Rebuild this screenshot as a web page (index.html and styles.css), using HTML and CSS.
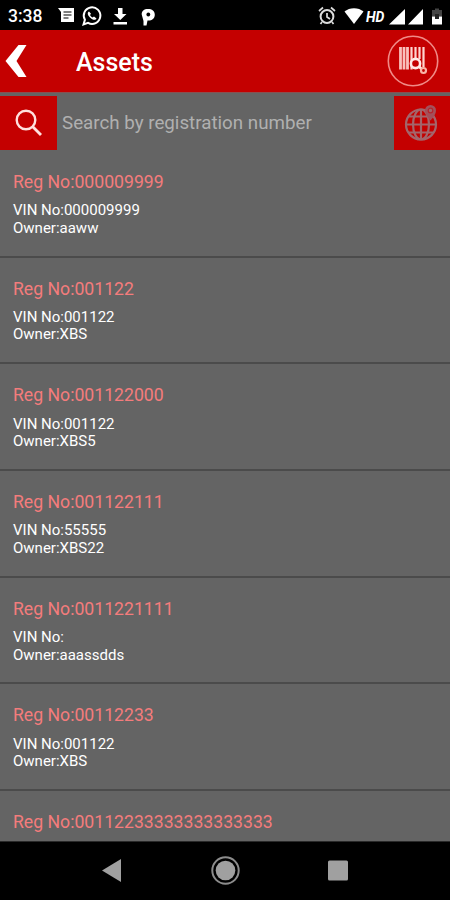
FILE: index.html
```html
<!DOCTYPE html>
<html lang="en">
<head>
    <meta charset="UTF-8">
    <meta name="viewport" content="width=device-width, initial-scale=1.0">
    <title>Assets</title>
    <link rel="stylesheet" href="styles.css">
</head>
<body>
    <div class="screen">
        <!-- Status bar -->
        <div class="status-bar">
            <span class="clock">3:38</span>
            <svg class="status-left" width="100" height="24" viewBox="0 0 100 24">
                <path d="M0 4h16v14H3V8z" fill="#fff"/>
                <path d="M5.500 8h8M5.500 11h8M5.500 14h5" stroke="#000" stroke-width="1.200"/>
                <path d="M25.500 20.500l1.400-4.700a8.300 8.300 0 1 1 3.200 3.100z" fill="none" stroke="#fff" stroke-width="2"/>
                <path d="M31 7.500c-2 1-1.500 3.500 1 6s5.500 3.300 6.500 1l-2.500-2-1.500 1c-1-.5-2-1.500-2.500-2.500l1-1.300z" fill="#fff"/>
                <path d="M60 4h4.500v6h4l-6.200 6-6.300-6h4zM55.500 18h13.500v2.500H55.500z" fill="#fff"/>
                <path d="M85.500 21.500V17l-1.800-6.500C83.500 7 86 5 90 5c4 0 6.800 2 6.800 5.700 0 3.800-2.800 5.800-6.300 5.800h-1l-1 5z" fill="#fff"/>
                <circle cx="90.300" cy="10.500" r="1.900" fill="#000"/>
            </svg>
            <svg class="status-right" width="126" height="24" viewBox="0 0 126 24">
                <circle cx="9" cy="12.500" r="6.400" fill="none" stroke="#ddd" stroke-width="2"/>
                <path d="M1 7l4-3.500M17 7l-4-3.500M9 9v4l3 2M4 18l-1.500 2M14 18l1.500 2" fill="none" stroke="#ddd" stroke-width="1.700"/>
                <path d="M26.500 7.500c5-4.500 14-4.500 19 0L36 20z" fill="#fff"/>
                <text class="hd" x="48" y="17.500">HD</text>
                <path d="M71 20.500L87 5v15.500zM90 20.500L105 5v15.500z" fill="#fff"/>
                <path d="M114 6h3V4.500h4V6h3v6.500h-10z" fill="#444"/>
                <path d="M114 12.500h10v8h-10z" fill="#fff"/>
                <path d="M117 10h4v5h-4z" fill="#222"/>
            </svg>
        </div>

        <!-- Title bar -->
        <header class="title-bar">
            <svg class="back-icon" width="22" height="34" viewBox="0 0 22 34">
                <path d="M13.500 1H21.500L11.500 17 21.500 33h-8L.500 17z" fill="#fff"/>
            </svg>
            <h1>Assets</h1>
            <svg class="scan-icon" width="52" height="52" viewBox="0 0 52 52">
                <circle cx="26" cy="26" r="24.700" fill="none" stroke="#f08a86" stroke-width="1.600"/>
                <path d="M13.500 12v22.500M17 12v22.500M20.500 12v22.500" stroke="#f9c0bb" stroke-width="2.800"/>
                <path d="M24.500 12v22.500M28.500 12v12M32.500 12v12M36.500 12v20" stroke="#ffd5d0" stroke-width="2.200"/>
                <circle cx="28.500" cy="28.500" r="4.600" fill="#c40000" stroke="#ffe9e6" stroke-width="2.600"/>
                <path d="M32 31.500l2.500 2.500" stroke="#ffe9e6" stroke-width="2.600"/>
                <circle cx="36.500" cy="35.500" r="2.500" fill="none" stroke="#f9b5a8" stroke-width="2.200"/>
            </svg>
        </header>

        <!-- Search -->
        <div class="search-bar">
            <button class="search-button" aria-label="Search">
                <svg width="28" height="28" viewBox="0 0 28 28">
                    <circle cx="11" cy="11" r="9.300" fill="none" stroke="#ffe0dd" stroke-width="2.400"/>
                    <path d="M17.500 17.500L26 26" stroke="#ffe0dd" stroke-width="2.900"/>
                </svg>
            </button>
            <span class="search-input">Search by registration number</span>
            <button class="globe-button" aria-label="Search online">
                <svg width="36" height="38" viewBox="0 0 36 38">
                    <g fill="none" stroke="#a3656b" stroke-width="2.200">
                        <circle cx="17" cy="20.500" r="15"/>
                        <ellipse cx="17" cy="20.500" rx="8" ry="15"/>
                        <path d="M17 5.500v30M2 20.500h30M4 12.500h26M4 28.500h26"/>
                    </g>
                    <path d="M26.500 16.500c-3-3.500-5.500-6.500-5.500-10a5.500 5.500 0 0 1 11 0C32 10 29.500 13 26.500 16.500z" fill="#a3505a"/>
                    <circle cx="26.500" cy="6.500" r="2.300" fill="#a3656b" stroke="#b5242b" stroke-width="1.200"/>
                </svg>
            </button>
        </div>

        <!-- Asset list -->
        <ul class="asset-list">
            <li class="asset">
                <h2>Reg No:000009999</h2>
                <p>VIN No:000009999</p>
                <p>Owner:aaww</p>
            </li>
            <li class="asset">
                <h2>Reg No:001122</h2>
                <p>VIN No:001122</p>
                <p>Owner:XBS</p>
            </li>
            <li class="asset">
                <h2>Reg No:001122000</h2>
                <p>VIN No:001122</p>
                <p>Owner:XBS5</p>
            </li>
            <li class="asset">
                <h2>Reg No:001122111</h2>
                <p>VIN No:55555</p>
                <p>Owner:XBS22</p>
            </li>
            <li class="asset">
                <h2>Reg No:0011221111</h2>
                <p>VIN No:</p>
                <p>Owner:aaassdds</p>
            </li>
            <li class="asset">
                <h2>Reg No:00112233</h2>
                <p>VIN No:001122</p>
                <p>Owner:XBS</p>
            </li>
            <li class="asset">
                <h2>Reg No:00112233333333333333</h2>
            </li>
        </ul>

        <!-- Navigation bar -->
        <nav class="nav-bar">
            <svg width="450" height="58" viewBox="0 0 450 58">
                <path d="M102 28.500l19-11.500v23z" fill="#a0a0a0"/>
                <circle cx="225.500" cy="28.500" r="13.200" fill="none" stroke="#8c8c8c" stroke-width="2"/>
                <circle cx="225.500" cy="28.500" r="9.800" fill="#a0a0a0"/>
                <rect x="328" y="18.500" width="20" height="20" rx="1.500" fill="#a0a0a0"/>
            </svg>
        </nav>
    </div>
</body>
</html>
```

FILE: styles.css
```css
:root {
    --red: #c40000;
    --grey: #646464;
    --line: #4b4b4b;
    --pink: #f47c7c;
}

* {
    margin: 0;
    padding: 0;
    box-sizing: border-box;
}

body {
    font-family: Roboto, "Liberation Sans", sans-serif;
    background: #000;
    color: #fff;
}

svg {
    display: block;
    flex-shrink: 0;
}

.screen {
    display: flex;
    flex-direction: column;
    width: 450px;
    height: 900px;
    background: var(--grey);
    overflow: hidden;
}

/* Status bar */
.status-bar {
    display: flex;
    align-items: center;
    height: 30px;
    padding: 2px 6px 0 8px;
    background: #000;
    flex-shrink: 0;
}

.clock {
    width: 50px;
    font-size: 17.500px;
    font-weight: 500;
}

.status-right {
    margin-left: auto;
}

.hd {
    font-size: 14px;
    font-weight: 700;
    font-style: italic;
    fill: #fff;
}

/* Title bar */
.title-bar {
    display: flex;
    align-items: center;
    height: 62px;
    padding: 0 11px 0 5px;
    background: var(--red);
    flex-shrink: 0;
}

.title-bar h1 {
    margin-left: 49px;
    padding-top: 3px;
    font-size: 25px;
    font-weight: 500;
}

.scan-icon {
    margin-left: auto;
}

/* Search */
.search-bar {
    display: flex;
    align-items: center;
    height: 58px;
    padding-top: 3px;
    border-top: 1px solid #8a5050;
    flex-shrink: 0;
}

.search-bar button {
    display: flex;
    align-items: center;
    justify-content: center;
    height: 54px;
    width: 57px;
    border: none;
    background: var(--red);
}

.search-bar .globe-button {
    width: 56px;
}

.search-input {
    flex: 1;
    padding-left: 5px;
    font-size: 18.750px;
    color: #b0b0b0;
}

/* Asset list */
.asset-list {
    flex: 1;
    min-height: 0;
    padding-top: 1px;
    list-style: none;
    overflow: hidden;
}

.asset {
    height: 106.700px;
    padding: 21px 13px 0;
    border-bottom: 2px solid var(--line);
}

.asset h2 {
    margin-bottom: 10.300px;
    font-size: 17.650px;
    line-height: 20px;
    font-weight: 400;
    color: var(--pink);
}

.asset p {
    font-size: 15px;
    line-height: 17.500px;
}

/* Navigation bar */
.nav-bar {
    height: 59px;
    border-top: 1px solid #2a2a2a;
    background: #000;
    flex-shrink: 0;
}
```
